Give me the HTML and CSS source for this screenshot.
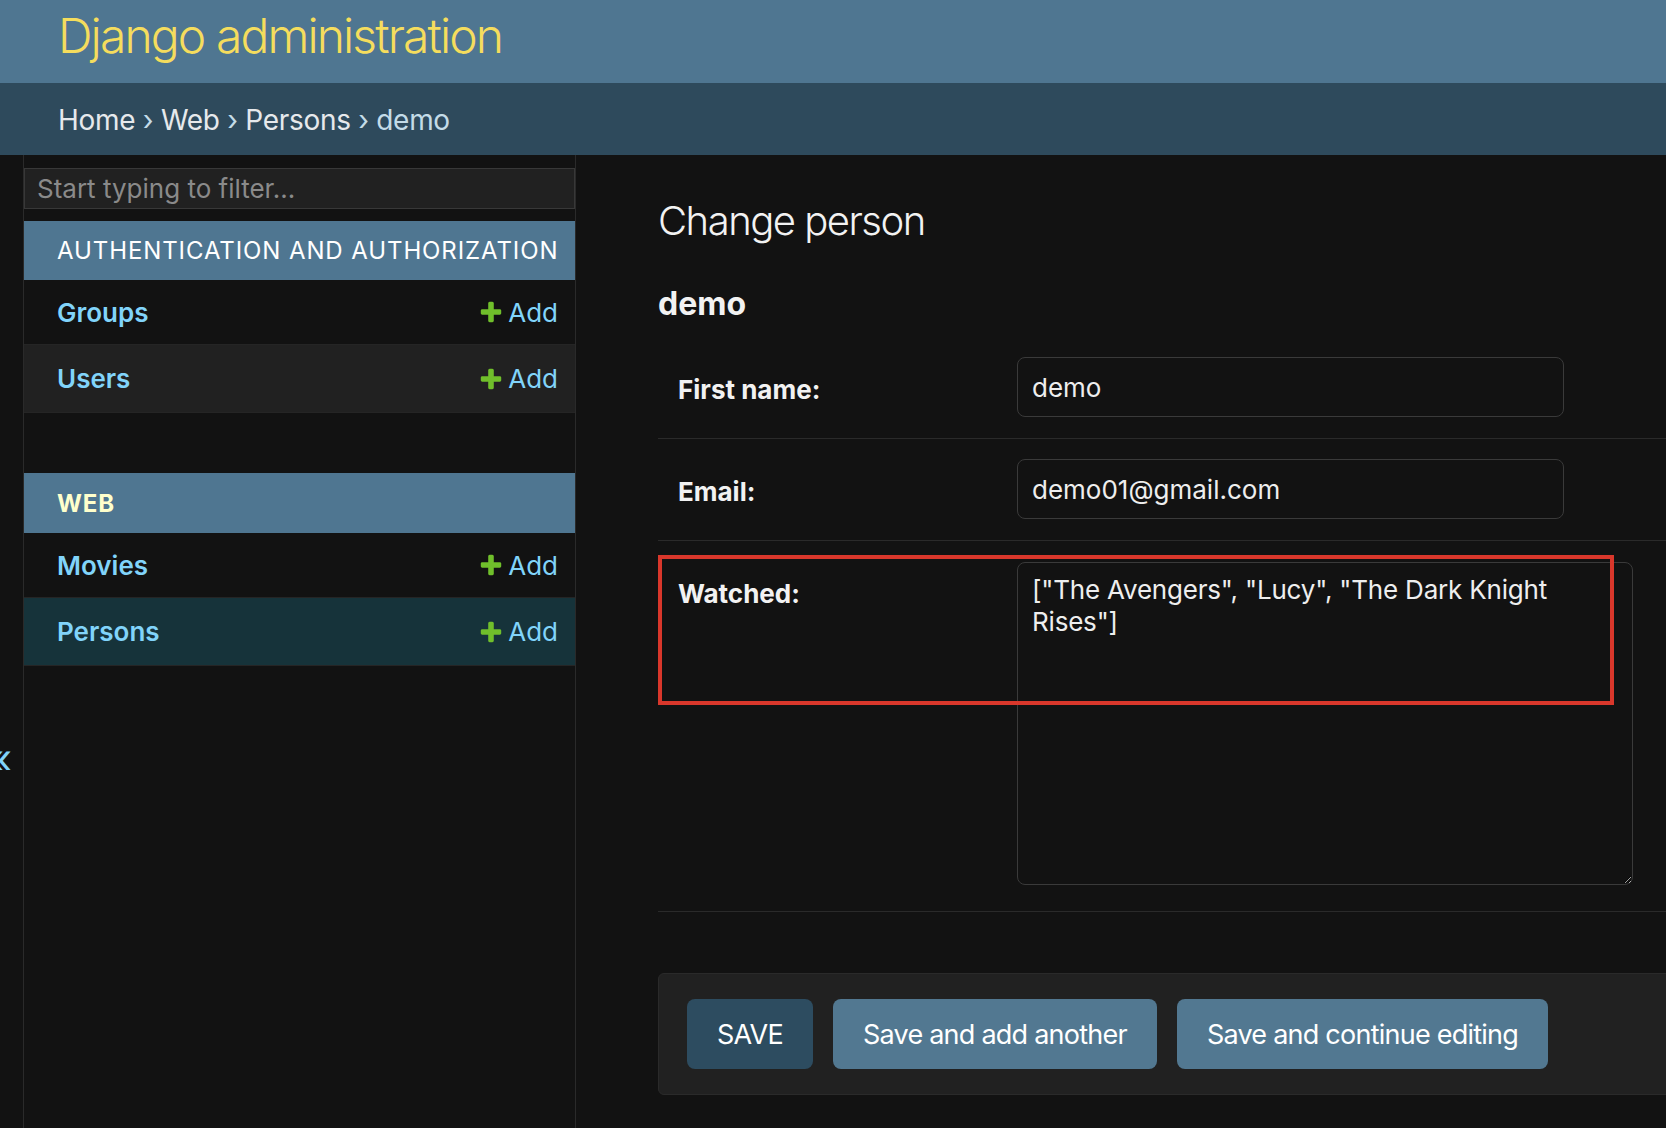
FILE: index.html
```html
<!DOCTYPE html>
<html lang="en">
<head>
<meta charset="utf-8">
<title>Change person | Django site admin</title>
<link rel="stylesheet" href="styles.css">
</head>
<body>
<div class="page">
  <header class="header">
    <div class="branding">Django administration</div>
  </header>
  <nav class="breadcrumbs">
    <a href="#" class="crumb">Home</a> <span class="sep">›</span> <a href="#" class="crumb">Web</a> <span class="sep">›</span> <a href="#" class="crumb">Persons</a> <span class="sep">›</span> <span class="current">demo</span>
  </nav>
  <div class="main">
    <div class="toggle"><span class="toggle-glyph">«</span></div>
    <aside class="sidebar">
      <input class="filter" type="search" placeholder="Start typing to filter...">
      <div class="module">
        <div class="caption">Authentication and Authorization</div>
        <div class="row">
          <a href="#" class="model">Groups</a>
          <a href="#" class="add"><svg class="plus" viewBox="0 0 1792 1792" width="26" height="26"><path d="M1600 796v192q0 40-28 68t-68 28h-416v416q0 40-28 68t-68 28h-192q-40 0-68-28t-28-68v-416h-416q-40 0-68-28t-28-68v-192q0-40 28-68t68-28h416v-416q0-40 28-68t68-28h192q40 0 68 28t28 68v416h416q40 0 68 28t28 68z"/></svg>Add</a>
        </div>
        <div class="row alt">
          <a href="#" class="model">Users</a>
          <a href="#" class="add"><svg class="plus" viewBox="0 0 1792 1792" width="26" height="26"><path d="M1600 796v192q0 40-28 68t-68 28h-416v416q0 40-28 68t-68 28h-192q-40 0-68-28t-28-68v-416h-416q-40 0-68-28t-28-68v-192q0-40 28-68t68-28h416v-416q0-40 28-68t68-28h192q40 0 68 28t28 68v416h416q40 0 68 28t28 68z"/></svg>Add</a>
        </div>
      </div>
      <div class="module">
        <div class="caption current-app">Web</div>
        <div class="row">
          <a href="#" class="model">Movies</a>
          <a href="#" class="add"><svg class="plus" viewBox="0 0 1792 1792" width="26" height="26"><path d="M1600 796v192q0 40-28 68t-68 28h-416v416q0 40-28 68t-68 28h-192q-40 0-68-28t-28-68v-416h-416q-40 0-68-28t-28-68v-192q0-40 28-68t68-28h416v-416q0-40 28-68t68-28h192q40 0 68 28t28 68v416h416q40 0 68 28t28 68z"/></svg>Add</a>
        </div>
        <div class="row selected">
          <a href="#" class="model">Persons</a>
          <a href="#" class="add"><svg class="plus" viewBox="0 0 1792 1792" width="26" height="26"><path d="M1600 796v192q0 40-28 68t-68 28h-416v416q0 40-28 68t-68 28h-192q-40 0-68-28t-28-68v-416h-416q-40 0-68-28t-28-68v-192q0-40 28-68t68-28h416v-416q0-40 28-68t68-28h192q40 0 68 28t28 68v416h416q40 0 68 28t28 68z"/></svg>Add</a>
        </div>
      </div>
    </aside>
    <main class="content">
      <h1 class="title">Change person</h1>
      <h2 class="subtitle">demo</h2>
      <div class="fieldset">
        <div class="form-row">
          <label class="label">First name:</label>
          <input class="text-input" type="text" value="demo">
        </div>
        <div class="form-row">
          <label class="label">Email:</label>
          <input class="text-input" type="text" value="demo01@gmail.com">
        </div>
        <div class="form-row multiline">
          <label class="label">Watched:</label>
          <textarea class="textarea">["The Avengers", "Lucy", "The Dark Knight Rises"]</textarea>
          <div class="annotation"></div>
        </div>
      </div>
      <div class="submit-row">
        <button class="btn default">SAVE</button>
        <button class="btn">Save and add another</button>
        <button class="btn">Save and continue editing</button>
      </div>
    </main>
  </div>
</div>
</body>
</html>
```

FILE: styles.css
```css
* { box-sizing: border-box; }
html, body { margin: 0; padding: 0; }
body {
  background: #121212;
  color: #eeeeee;
  font-family: Inter, "Noto Sans", "Liberation Sans", sans-serif;
  width: 1666px;
  height: 1128px;
  overflow: hidden;
}
a { text-decoration: none; }

.page {
  margin-left: -22px;
  width: 1900px;
}

.header {
  background: #4f7691;
  height: 83px;
  padding: 7px 80px 0;
}
.branding {
  color: #f5dd5d;
  font-size: 48px;
  font-weight: 300;
  line-height: 58px;
  letter-spacing: -1.9px;
}

.breadcrumbs {
  background: #2e4a5c;
  height: 72px;
  padding: 17px 80px 0;
  font-size: 28px;
  line-height: 40px;
  letter-spacing: -0.3px;
  color: #c4dce8;
}
.crumb { color: #e6e9ec; }
.sep { color: #c4dce8; }
.current { color: #c4dce8; }

.main {
  display: flex;
  align-items: stretch;
  min-height: 973px;
}

.toggle {
  flex: 0 0 46px;
  border-right: 1px solid #2a2a2a;
  text-align: center;
  padding-top: 580px;
  color: #81d4fa;
  font-size: 40px;
  line-height: 48px;
}

.sidebar {
  flex: 0 0 552px;
  border-right: 1px solid #2a2a2a;
}

.filter {
  display: block;
  width: 100%;
  height: 41px;
  margin: 13px 0 12px;
  padding: 0 12px;
  background: #212121;
  border: 1px solid #383838;
  color: #eeeeee;
  font-family: inherit;
  font-size: 26px;
  outline: none;
}
.filter::placeholder { color: #8a8a8a; }

.module { margin-bottom: 60px; }

.caption {
  background: #4f7691;
  color: #ffffff;
  height: 59px;
  line-height: 59px;
  padding-left: 33px;
  font-size: 24px;
  letter-spacing: 0.9px;
  text-transform: uppercase;
}
.caption.current-app {
  color: #ffffcc;
  font-weight: 700;
  height: 60px;
  line-height: 62px;
}

.row {
  height: 65px;
  display: flex;
  align-items: center;
  justify-content: space-between;
  padding: 0 17px 0 33px;
  border-bottom: 1px solid #252525;
  background: #121212;
}
.row:last-child { height: 68px; }
.row.alt { background: #212121; }
.row.selected { background: #16333a; }

.model {
  color: #81d4fa;
  font-size: 26px;
  font-weight: 600;
}
.add {
  display: flex;
  align-items: center;
  color: #81d4fa;
  font-size: 26px;
}
.plus {
  fill: #70bf2b;
  margin-right: 4px;
}

.content {
  flex: 1;
  padding: 42px 80px 0 82px;
}

.title {
  margin: 0;
  font-size: 40px;
  font-weight: 300;
  line-height: 48px;
  letter-spacing: -1.5px;
  color: #f2f2f2;
}
.subtitle {
  margin: 39px 0 13px;
  font-size: 32px;
  font-weight: 700;
  line-height: 40px;
  color: #f2f2f2;
}

.form-row {
  position: relative;
  display: flex;
  align-items: center;
  padding: 20px 20px 21px;
  border-bottom: 1px solid #2a2a2a;
}
.form-row.multiline {
  align-items: flex-start;
  padding: 21px 20px 26px;
}
.label {
  flex: 0 0 339px;
  font-size: 26px;
  font-weight: 700;
  line-height: 32px;
  color: #f2f2f2;
  padding-top: 5px;
}
.multiline .label { padding-top: 16px; }

.text-input {
  width: 547px;
  height: 60px;
  padding: 0 14px;
  background: #121212;
  border: 1px solid #3a3a3a;
  border-radius: 8px;
  color: #eeeeee;
  font-family: inherit;
  font-size: 26px;
  outline: none;
}
.textarea {
  width: 616px;
  height: 323px;
  padding: 11px 14px;
  background: #121212;
  border: 1px solid #3a3a3a;
  border-radius: 8px;
  color: #eeeeee;
  font-family: inherit;
  font-size: 26px;
  line-height: 32px;
  letter-spacing: -0.2px;
  resize: vertical;
  outline: none;
}

.annotation {
  position: absolute;
  left: 0;
  top: 14px;
  width: 956px;
  height: 150px;
  border: 4px solid #d9372b;
  pointer-events: none;
}

.submit-row {
  margin-top: 61px;
  padding: 25px 28px;
  background: #212121;
  border: 1px solid #2a2a2a;
  border-radius: 6px;
  display: flex;
  gap: 20px;
}
.btn {
  height: 70px;
  padding: 0 30px;
  border: none;
  border-radius: 8px;
  background: #527891;
  color: #ffffff;
  font-family: inherit;
  font-size: 27px;
  letter-spacing: -0.76px;
}
.btn.default { background: #2d4c60; }
```
